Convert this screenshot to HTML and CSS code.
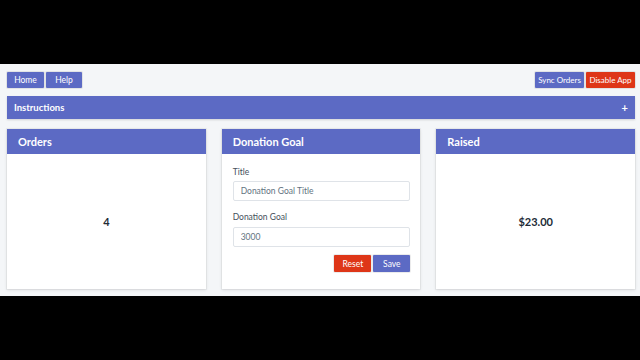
FILE: index.html
```html
<!DOCTYPE html>
<html lang="en">
<head>
  <meta charset="UTF-8" />
  <meta name="viewport" content="width=device-width, initial-scale=1" />
  <title>Donation Goal</title>
  <link rel="stylesheet" href="styles.css">
</head>
<body>
  <div class="app">
    <div class="topbar">
      <div class="grupo">
        <button class="btn">Home</button>
        <button class="btn">Help</button>
      </div>
      <div class="grupo">
        <button class="btn">Sync Orders</button>
        <button class="btn rojo">Disable App</button>
      </div>
    </div>

    <div class="instrucciones">
      <span>Instructions</span>
      <span class="mas">+</span>
    </div>

    <div class="tarjetas">
      <div class="tarjeta">
        <div class="cabecera">Orders</div>
        <div class="cuerpo centro">4</div>
      </div>

      <div class="tarjeta">
        <div class="cabecera">Donation Goal</div>
        <form class="cuerpo form">
          <label>Title</label>
          <input type="text" placeholder="Donation Goal Title" />
          <label>Donation Goal</label>
          <input type="text" value="3000" />
          <div class="acciones">
            <button type="button" class="btn rojo">Reset</button>
            <button type="button" class="btn">Save</button>
          </div>
        </form>
      </div>

      <div class="tarjeta">
        <div class="cabecera">Raised</div>
        <div class="cuerpo centro">$23.00</div>
      </div>
    </div>
  </div>
</body>
</html>
```

FILE: styles.css
```css
* {
  margin: 0;
  padding: 0;
  box-sizing: border-box;
  font-family: "Lato", "Open Sans", sans-serif;
}
body {
  background: #000;
  width: 640px;
  height: 360px;
  overflow: hidden;
}
.app {
  margin-top: 64px;
  height: 232px;
  background: #f4f6f8;
  padding: 8px 5px 0 7px;
}
.topbar {
  display: flex;
  justify-content: space-between;
  height: 16px;
}
.grupo {
  display: flex;
  gap: 2px;
}
.btn {
  border: none;
  background: #5c6ac4;
  color: #fff;
  font-size: 8.5px;
  height: 16px;
  padding: 0;
  white-space: nowrap;
  border-radius: 1px;
  box-shadow: 0 0 0 1px rgba(63, 63, 68, 0.1);
}
.topbar .btn {
  width: 36px;
}
.topbar .btn:first-child {
  width: 37px;
}
.topbar .grupo:last-child .btn {
  width: 49px;
  font-size: 8px;
}
.btn.rojo {
  background: #de3618;
}
.instrucciones {
  margin-top: 8px;
  height: 23px;
  background: #5c6ac4;
  color: #fff;
  font-size: 9.5px;
  font-weight: 700;
  display: flex;
  align-items: center;
  justify-content: space-between;
  padding: 0 7px;
  box-shadow: 0 1px 2px rgba(0, 0, 0, 0.15);
}
.instrucciones .mas {
  font-size: 11px;
}
.tarjetas {
  margin-top: 10px;
  display: grid;
  grid-template-columns: repeat(3, 1fr);
  gap: 16px;
}
.tarjeta {
  background: #fff;
  height: 160px;
  display: flex;
  flex-direction: column;
  box-shadow: 0 0 0 1px rgba(63, 63, 68, 0.05), 0 1px 3px rgba(63, 63, 68, 0.15);
}
.cabecera {
  height: 25px;
  background: #5c6ac4;
  color: #fff;
  font-size: 11px;
  font-weight: 700;
  display: flex;
  align-items: center;
  padding: 0 11px;
}
.cuerpo {
  flex: 1;
}
.centro {
  display: flex;
  align-items: center;
  justify-content: center;
  font-size: 11px;
  font-weight: 700;
  color: #212b36;
}
.form {
  padding: 12px 10px 0 11px;
  display: flex;
  flex-direction: column;
}
.form label {
  font-size: 8.5px;
  line-height: 12px;
  color: #454f5b;
}
.form input {
  margin-top: 3px;
  margin-bottom: 10px;
  height: 20px;
  border: 1px solid #dfe3e8;
  border-radius: 2px;
  padding: 0 7px;
  font-size: 8.5px;
  color: #637381;
  outline: none;
}
.form input + label + input {
  margin-top: 4px;
  margin-bottom: 8px;
}
.form input::placeholder {
  color: #637381;
}
.acciones {
  display: flex;
  justify-content: flex-end;
  gap: 2px;
}
.acciones .btn {
  height: 17px;
  width: 37px;
}
```
